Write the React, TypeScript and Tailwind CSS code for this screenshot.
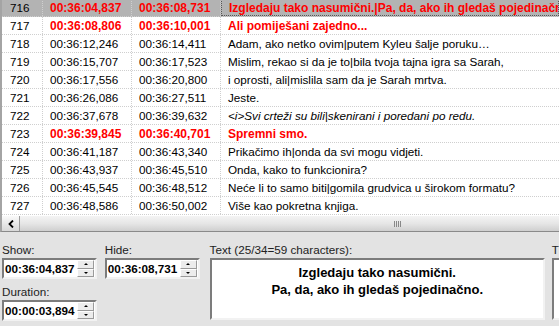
import React from 'react'

type Row = { n: number; show: string; hide: string; text: string; red?: boolean; sel?: boolean; italic?: boolean }

const rows: Row[] = [
  { n: 716, show: '00:36:04,837', hide: '00:36:08,731', text: 'Izgledaju tako nasumični.|Pa, da, ako ih gledaš pojedinačno.', red: true, sel: true },
  { n: 717, show: '00:36:08,806', hide: '00:36:10,001', text: 'Ali pomiješani zajedno...', red: true },
  { n: 718, show: '00:36:12,246', hide: '00:36:14,411', text: 'Adam, ako netko ovim|putem Kyleu šalje poruku…' },
  { n: 719, show: '00:36:15,707', hide: '00:36:17,523', text: 'Mislim, rekao si da je to|bila tvoja tajna igra sa Sarah,' },
  { n: 720, show: '00:36:17,556', hide: '00:36:20,800', text: 'i oprosti, ali|mislila sam da je Sarah mrtva.' },
  { n: 721, show: '00:36:26,086', hide: '00:36:27,511', text: 'Jeste.' },
  { n: 722, show: '00:36:37,678', hide: '00:36:39,632', text: '<i>Svi crteži su bili|skenirani i poredani po redu.', italic: true },
  { n: 723, show: '00:36:39,845', hide: '00:36:40,701', text: 'Spremni smo.', red: true },
  { n: 724, show: '00:36:41,187', hide: '00:36:43,340', text: 'Prikačimo ih|onda da svi mogu vidjeti.' },
  { n: 725, show: '00:36:43,937', hide: '00:36:45,510', text: 'Onda, kako to funkcionira?' },
  { n: 726, show: '00:36:45,545', hide: '00:36:48,512', text: 'Neće li to samo biti|gomila grudvica u širokom formatu?' },
  { n: 727, show: '00:36:48,586', hide: '00:36:50,002', text: 'Više kao pokretna knjiga.' },
]

function Spinner() {
  return (
    <div className="flex flex-col w-[17px] h-[17px] mr-[1px]">
      <div className="flex-1 flex items-center justify-center bg-[#ececec] border border-t-white border-l-white border-b-[#9a9a9a] border-r-[#9a9a9a]">
        <div className="w-0 h-0 border-l-[2px] border-r-[2px] border-b-[2px] border-l-transparent border-r-transparent border-b-black" />
      </div>
      <div className="flex-1 flex items-center justify-center bg-[#ececec] border border-t-white border-l-white border-b-[#9a9a9a] border-r-[#9a9a9a]">
        <div className="w-0 h-0 border-l-[2px] border-r-[2px] border-t-[2px] border-l-transparent border-r-transparent border-t-black" />
      </div>
    </div>
  )
}

function TimeBox({ value }: { value: string }) {
  return (
    <div className="w-[95px] h-[21px] bg-white flex items-center justify-between border-2 border-t-[#7c7c7c] border-l-[#7c7c7c] border-b-[#f2f2f2] border-r-[#f2f2f2]">
      <span className="pl-[1px] font-bold text-[11.7px] text-black">{value}</span>
      <Spinner />
    </div>
  )
}

export default function App() {
  return (
    <div className="w-[559px] h-[326px] overflow-hidden bg-[#e3e3e3] font-['Liberation_Sans',Arial,sans-serif] text-[11.7px] text-black">
      {/* subtitle list */}
      <div className="h-[216px] bg-white border-l-2 border-[#a4a4a4] overflow-hidden">
        <div className="-mt-[1px]">
          {rows.map((r) => (
            <div
              key={r.n}
              className={`flex h-[18px] items-center border-b border-dotted border-[#cfcfcf] whitespace-nowrap ${r.sel ? 'bg-[#b3b3b3]' : ''} ${r.red ? 'text-[#ff0000] font-bold text-[12px]' : ''}`}
            >
              <div className="w-[41px] h-full flex items-center pl-[8px] border-r border-dotted border-[#cfcfcf] font-normal text-[11.7px] text-black">{r.n}</div>
              <div className="w-[89px] h-full flex items-center pl-[7px] border-r border-dotted border-[#cfcfcf]">{r.show}</div>
              <div className="w-[89px] h-full flex items-center pl-[7px] border-r border-dotted border-[#cfcfcf]">{r.hide}</div>
              <div className={`flex-1 h-full flex items-center pl-[7px] overflow-hidden ${r.italic ? 'italic' : ''} ${r.sel ? 'border border-dotted border-[#555]' : ''}`}>{r.text}</div>
            </div>
          ))}
        </div>
      </div>

      {/* horizontal scrollbar */}
      <div className="h-[16px] flex border-l-2 border-[#a4a4a4] border-b border-b-[#8a8a8a] bg-gradient-to-b from-[#f4f4f4] via-[#e6e6e6] to-[#cfcfcf]">
        <div className="w-[18px] h-full flex items-center justify-center border-r border-[#9c9c9c] bg-gradient-to-b from-[#fafafa] to-[#d8d8d8]">
          <svg width="6" height="8" viewBox="0 0 6 8">
            <path d="M5 0.5 L1.5 4 L5 7.5" stroke="#000" strokeWidth="1.8" fill="none" />
          </svg>
        </div>
        <div className="flex-1 relative">
          <div className="absolute left-[374px] top-[5px] flex gap-[1px]">
            <div className="w-[1px] h-[6px] bg-[#888]" />
            <div className="w-[1px] h-[6px] bg-[#888]" />
            <div className="w-[1px] h-[6px] bg-[#888]" />
            <div className="w-[1px] h-[6px] bg-[#888]" />
          </div>
        </div>
      </div>

      {/* edit panel */}
      <div className="flex pt-[10px] text-[#222]">
        <div className="flex flex-col pl-[2px] w-[105px]">
          <div className="h-[16px] leading-[16px]">Show:</div>
          <TimeBox value="00:36:04,837" />
          <div className="h-[16px] leading-[16px] mt-[5px]">Duration:</div>
          <TimeBox value="00:00:03,894" />
        </div>
        <div className="flex flex-col w-[105px]">
          <div className="h-[16px] leading-[16px]">Hide:</div>
          <TimeBox value="00:36:08,731" />
        </div>
        <div className="flex flex-col w-[336px]">
          <div className="h-[16px] leading-[16px]">Text (25/34=59 characters):</div>
          <div className="h-[62px] bg-white border-2 border-t-[#7c7c7c] border-l-[#7c7c7c] border-b-[#f2f2f2] border-r-[#f2f2f2] pt-[4px] text-center font-bold text-[13px] leading-[17px] text-black">
            <div>Izgledaju tako nasumični.</div>
            <div>Pa, da, ako ih gledaš pojedinačno.</div>
          </div>
        </div>
        <div className="flex flex-col ml-[7px] flex-1">
          <div className="h-[16px] leading-[16px]">T</div>
          <div className="h-[62px] bg-white border-2 border-t-[#7c7c7c] border-l-[#7c7c7c] border-b-[#f2f2f2] border-r-0" />
        </div>
      </div>
    </div>
  )
}
